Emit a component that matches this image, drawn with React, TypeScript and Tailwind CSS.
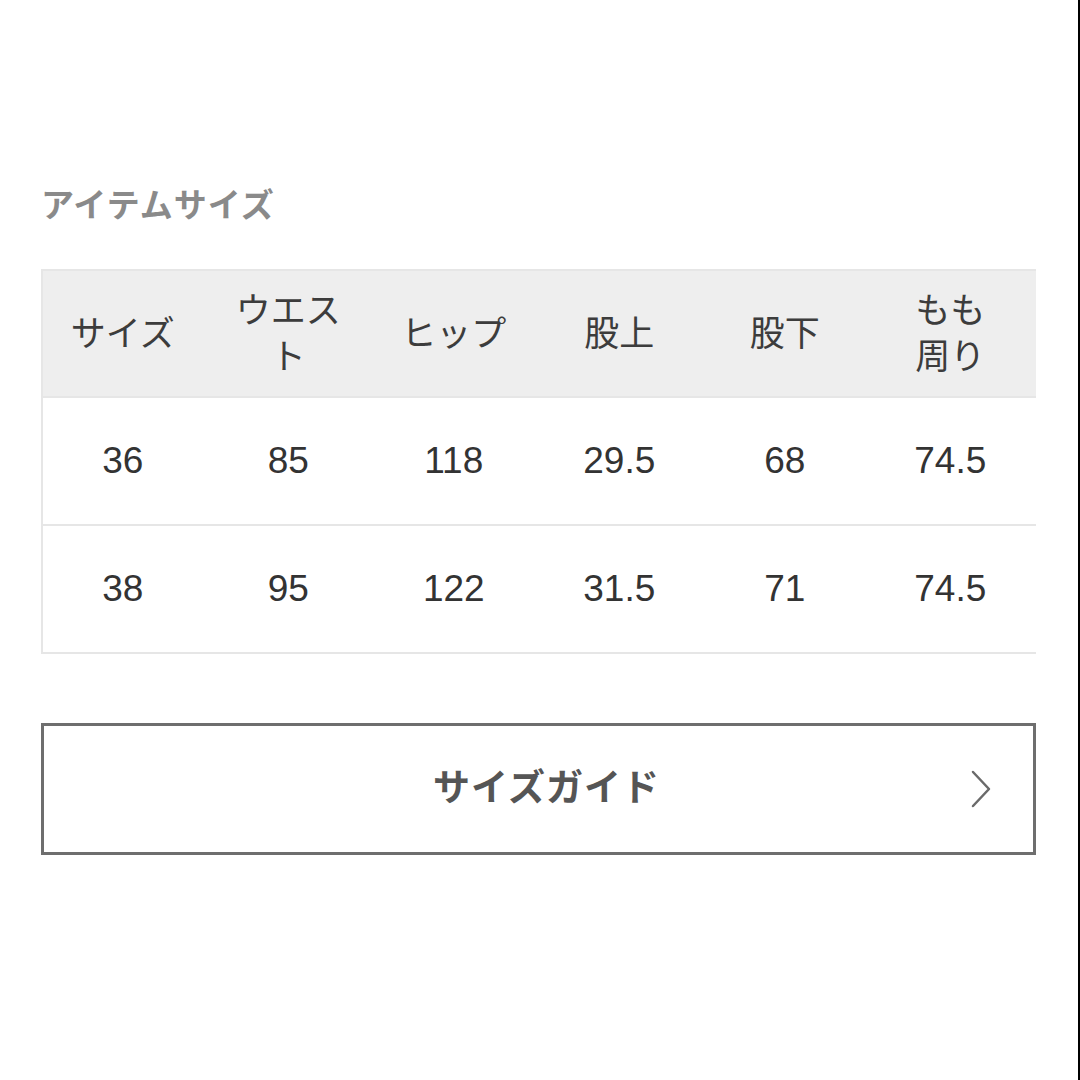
import React from "react";

const headers: string[][] = [
  ["サイズ"],
  ["ウエス", "ト"],
  ["ヒップ"],
  ["股上"],
  ["股下"],
  ["もも", "周り"],
];

const rows: string[][] = [
  ["36", "85", "118", "29.5", "68", "74.5"],
  ["38", "95", "122", "31.5", "71", "74.5"],
];

const font = { fontFamily: '"Liberation Sans", "Noto Sans CJK JP", sans-serif' };

export default function App() {
  return (
    <div
      className="h-[1080px] w-[1080px] border-r-2 border-black bg-white"
      style={font}
    >
      <div className="pl-[41px] pt-[186px]">
        <h2 className="text-[33px] font-bold leading-[40px] tracking-[1px] text-[#8a8a8a]">
          アイテムサイズ
        </h2>

        <div className="mt-[43px] w-[995px] border-l-2 border-[#e6e6e6]">
          <div className="grid h-[129px] grid-cols-6 border-y-2 border-[#e6e6e6] bg-[#eeeeee]">
            {headers.map((lines, i) => (
              <div
                key={i}
                className="flex flex-col items-center justify-center pr-[6px] text-[35px] leading-[46px] text-[#3c3c3c]"
              >
                {lines.map((l) => (
                  <span key={l}>{l}</span>
                ))}
              </div>
            ))}
          </div>
          {rows.map((r, ri) => (
            <div
              key={ri}
              className="grid h-[128px] grid-cols-6 border-b-2 border-[#e6e6e6]"
            >
              {r.map((v, ci) => (
                <div
                  key={ci}
                  className="flex items-center justify-center pr-[6px] text-[37px] text-[#333333]"
                >
                  {v}
                </div>
              ))}
            </div>
          ))}
        </div>

        <button className="relative mt-[69px] flex h-[132px] w-[995px] items-center justify-center border-[3px] border-[#6e6e6e] bg-white">
          <span className="pl-[16px] text-[37px] font-bold tracking-[1px] text-[#555555]">
            サイズガイド
          </span>
          <svg
            className="absolute right-[41px] top-1/2 -translate-y-1/2"
            width="22"
            height="38"
            viewBox="0 0 22 38"
            fill="none"
          >
            <path
              d="M3 2 L19 19 L3 36"
              stroke="#6a6a6a"
              strokeWidth="2.5"
              strokeLinecap="round"
              strokeLinejoin="round"
            />
          </svg>
        </button>
      </div>
    </div>
  );
}
